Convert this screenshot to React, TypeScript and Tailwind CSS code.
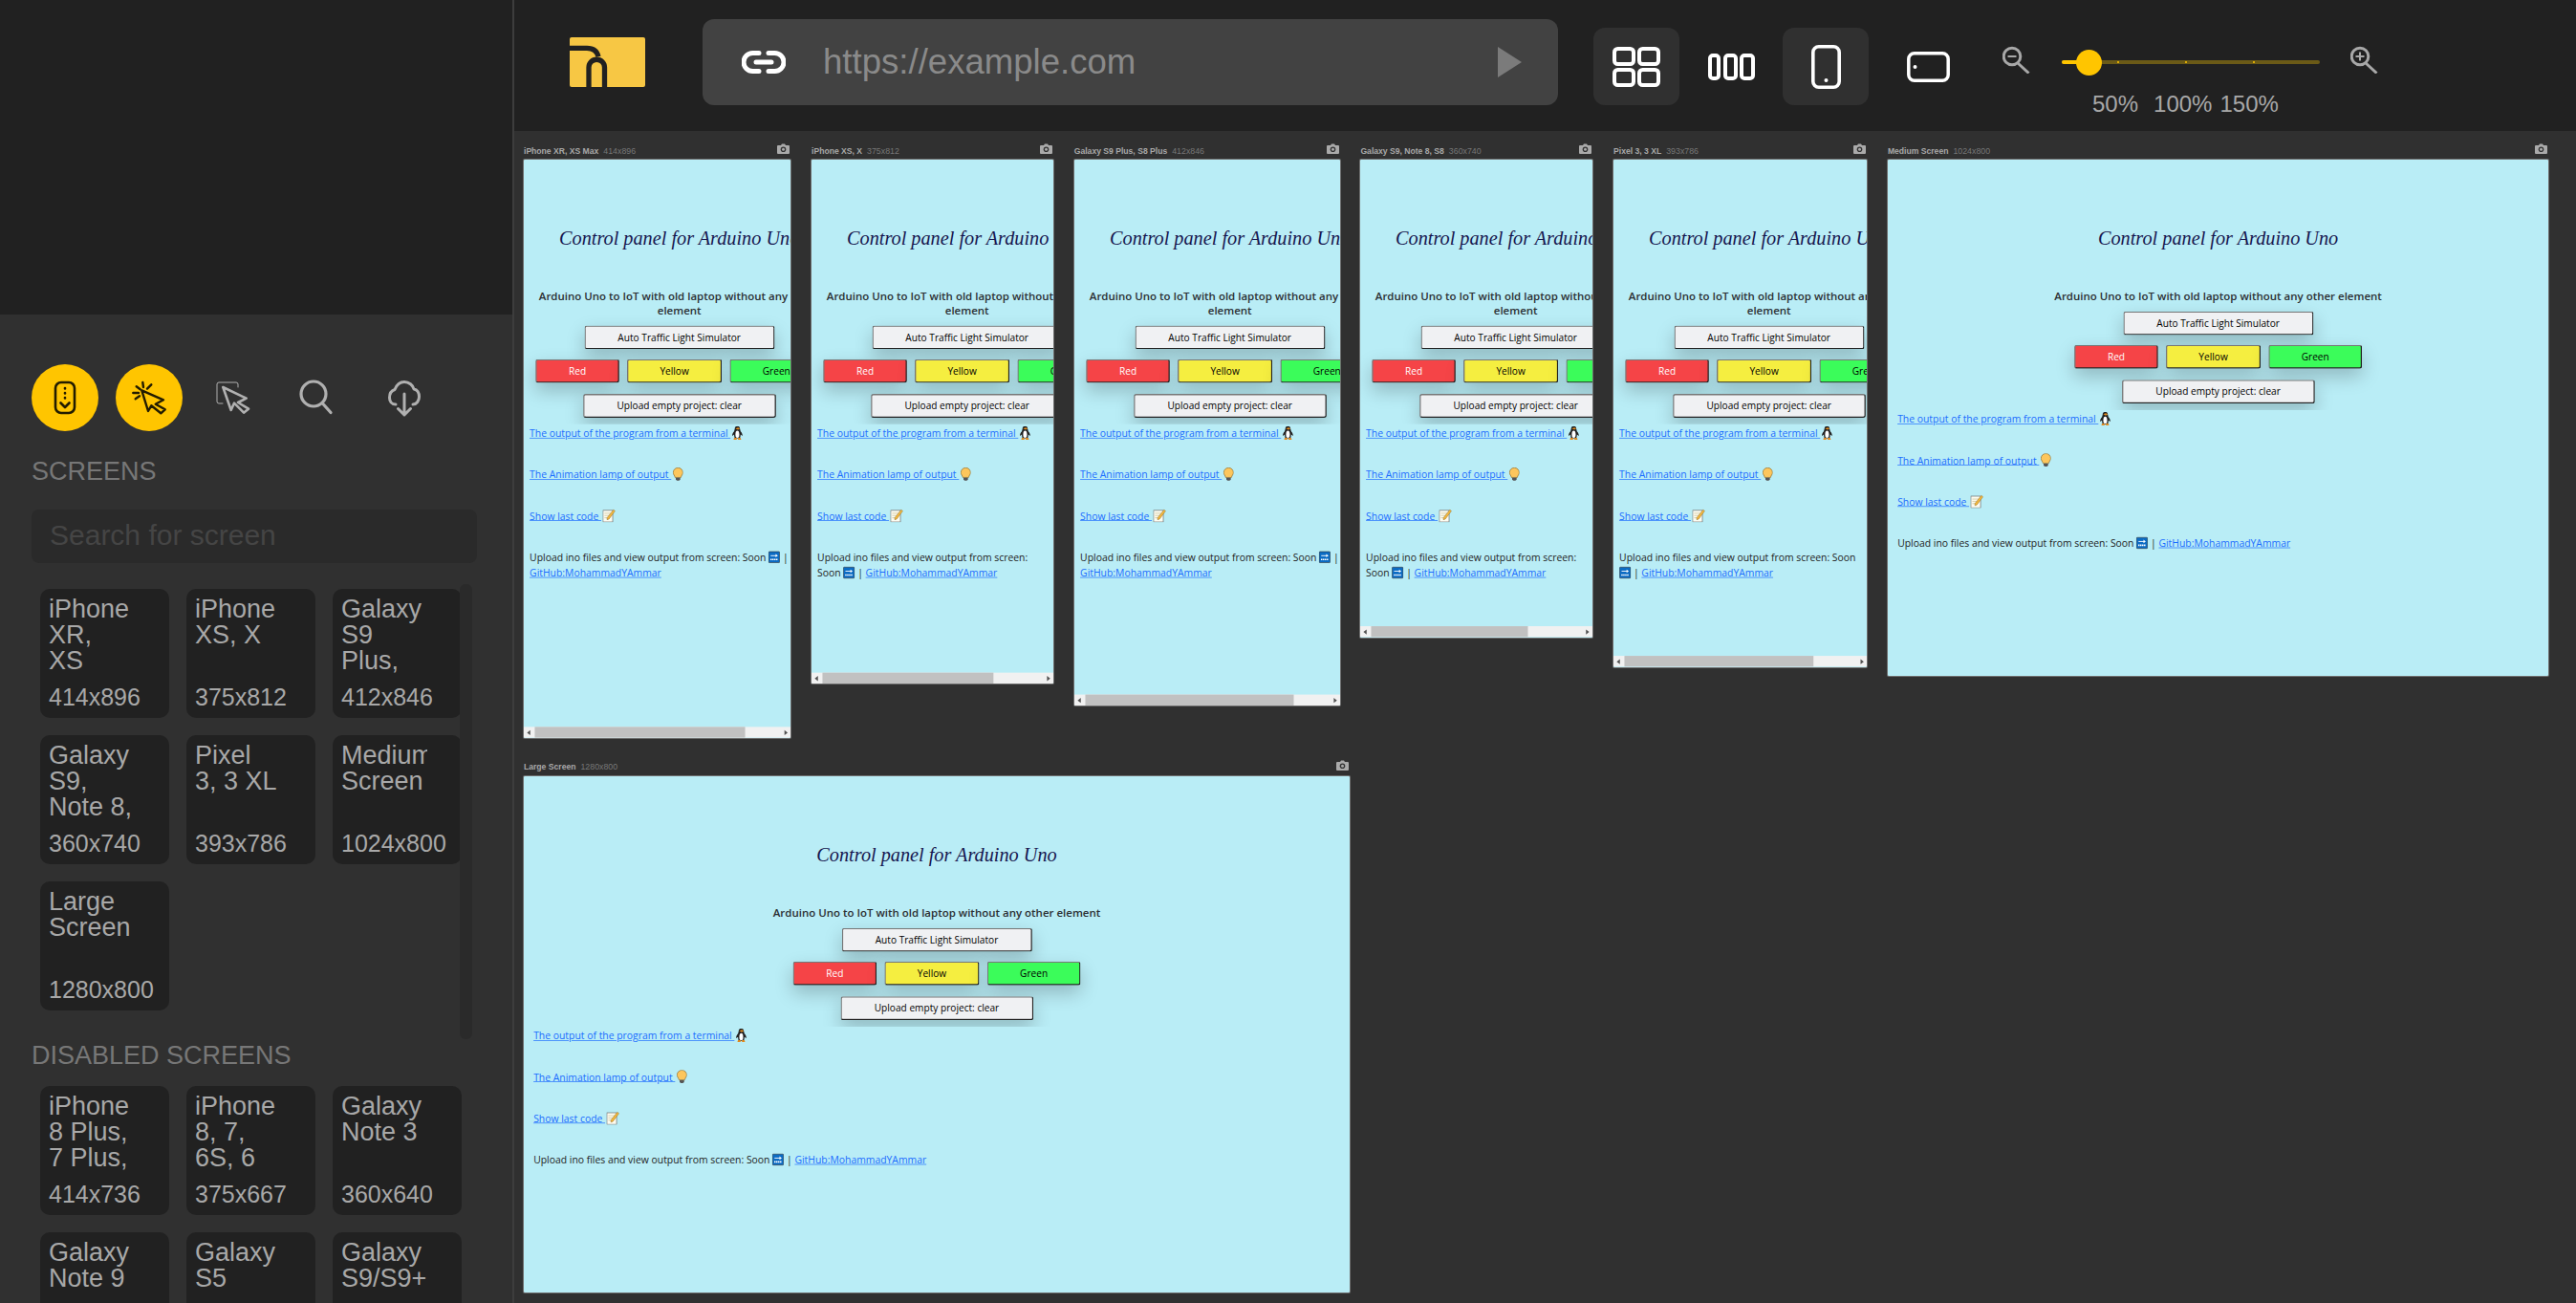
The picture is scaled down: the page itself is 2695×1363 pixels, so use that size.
import React from "react";

type Scr = { n: string; l: string[]; d: string };
const active: Scr[] = [
  { n: "iPhone XR, XS Max", l: ["iPhone", "XR,", "XS"], d: "414x896" },
  { n: "iPhone XS, X", l: ["iPhone", "XS, X"], d: "375x812" },
  { n: "Galaxy S9 Plus, S8 Plus", l: ["Galaxy", "S9", "Plus,"], d: "412x846" },
  { n: "Galaxy S9, Note 8, S8", l: ["Galaxy", "S9,", "Note 8,"], d: "360x740" },
  { n: "Pixel 3, 3 XL", l: ["Pixel", "3, 3 XL"], d: "393x786" },
  { n: "Medium Screen", l: ["Medium", "Screen"], d: "1024x800" },
  { n: "Large Screen", l: ["Large", "Screen"], d: "1280x800" },
];
const disabled: Scr[] = [
  { n: "", l: ["iPhone", "8 Plus,", "7 Plus,"], d: "414x736" },
  { n: "", l: ["iPhone", "8, 7,", "6S, 6"], d: "375x667" },
  { n: "", l: ["Galaxy", "Note 3"], d: "360x640" },
  { n: "", l: ["Galaxy", "Note 9"], d: "360x740" },
  { n: "", l: ["Galaxy", "S5"], d: "360x640" },
  { n: "", l: ["Galaxy", "S9/S9+"], d: "360x740" },
];

function Card({ s }: { s: Scr }) {
  return (
    <div className="w-[135px] h-[135px] bg-[#212121] rounded-[10px] pl-[9px] pt-[8px] text-[#a8a8a8] overflow-hidden">
      <div className="w-[90px] h-[81px] overflow-hidden text-[27px] leading-[27px]">
        {s.l.map((t) => (
          <div key={t} className="whitespace-nowrap">{t}</div>
        ))}
      </div>
      <div className="mt-[12px] text-[25px] leading-[25px]">{s.d}</div>
    </div>
  );
}

function PhoneScrollIcon() {
  return (
    <svg width="70" height="70" viewBox="0 0 70 70" fill="none" stroke="#221c00" strokeWidth="2.6" strokeLinecap="round" strokeLinejoin="round">
      <rect x="25" y="19" width="20" height="32" rx="6" />
      <path d="M35 25v.4M35 30v.4M35 35v.4" />
      <path d="M30.5 40.5 35 45l4.5-4.5" />
    </svg>
  );
}
function ClickIcon() {
  return (
    <svg width="70" height="70" viewBox="0 0 70 70" fill="none" stroke="#221c00" strokeWidth="2.4" strokeLinecap="round" strokeLinejoin="round">
      <path d="M27.3 27.3 50 37.3l-8.3 4.4 10 5.6-4.4 4-10-8-3.3 5.7z" />
      <path d="M28.3 19l.7 5M37.3 21.3l-4.3 4.4M21.7 23.3l4 3M18.3 30H24M20.7 36.3l4.3-3" />
    </svg>
  );
}
function SelectIcon() {
  return (
    <svg width="70" height="70" viewBox="0 0 70 70" fill="none" stroke="#b0b0b0" strokeLinejoin="round" strokeLinecap="round">
      <path d="M24 41h-4a2 2 0 0 1-2-2V21a2 2 0 0 1 2-2h18a2 2 0 0 1 2 2v3" strokeWidth="1" />
      <path d="M24.3 24 48.7 35.7 40 40l11 6.7-5 4-10-10-3.3 7.3z" strokeWidth="2.6" />
    </svg>
  );
}
function SearchIcon() {
  return (
    <svg width="70" height="70" viewBox="0 0 70 70" fill="none" stroke="#b0b0b0" strokeWidth="3.2" strokeLinecap="round">
      <circle cx="31" cy="31" r="13" />
      <path d="M40.5 41 49 50.5" />
    </svg>
  );
}
function CloudIcon() {
  return (
    <svg width="34" height="38" viewBox="0 0 34 38" fill="none" stroke="#b0b0b0" strokeWidth="3" strokeLinecap="round" strokeLinejoin="round">
      <path d="M8 25C3.500 25 1.500 21.500 1.500 18 1.500 13.500 4 10.500 7 9.500 9 4.500 13 1.500 17 1.500c5 0 9 3.500 10 7.500 3.500.5 5.500 4 5.500 8 0 4-2.500 8-6.500 8" />
      <path d="M17 14v22M10.500 29.500 17 36l6.500-6.500" />
    </svg>
  );
}

function ZoomIcon({ plus }: { plus?: boolean }) {
  return (
    <svg width="29" height="29" viewBox="0 0 29 29" fill="none" stroke="#a8a8a8" strokeWidth="3" className="mt-[-4px] shrink-0">
      <circle cx="10" cy="11" r="8.8" />
      <path d="M16 18 27.5 28.5" />
      <path d="M5.5 11h9" strokeWidth="2" />
      {plus ? <path d="M10 6.5v9" strokeWidth="2" /> : null}
    </svg>
  );
}

function Penguin() {
  return (
    <svg width="18" height="21" viewBox="0 0 18 21" className="inline-block align-[-4px] ml-[2px]">
      <path d="M9 0c3 0 4 2 4 4l1 4c2 2 3 5 3 7l-3-2c0 3-1 5-1 6H5c0-1-1-3-1-6l-3 2c0-2 1-5 3-7l1-4c0-2 1-4 4-4z" fill="#222" />
      <path d="M9 7c2 0 3 2 3 6s-1 5-3 5-3-1-3-5 1-6 3-6z" fill="#fff" />
      <path d="M6 3.500l4-1.500 3 1.500-3 2z" fill="#e08a1e" />
      <path d="M4 18h4v3H3zM10 18h4l1 3h-5z" fill="#e08a1e" />
    </svg>
  );
}
function Bulb() {
  return (
    <svg width="16" height="21" viewBox="0 0 16 21" className="inline-block align-[-4px] ml-[2px] mr-[2px]">
      <path d="M8 .5a7.500 7.500 0 0 1 7.500 7.500c0 3-2.500 4.500-3 7.500h-9c-.5-3-3-4.500-3-7.500A7.500 7.500 0 0 1 8 .5z" fill="#fdc65c" stroke="#8a6a2a" />
      <path d="M4.500 16h7v3l-2 1.500h-3l-2-1.500z" fill="#555" />
    </svg>
  );
}
function Memo() {
  return (
    <svg width="20" height="21" viewBox="0 0 20 21" className="inline-block align-[-4px] ml-[2px]">
      <rect x=".8" y="2.500" width="15" height="18" fill="#fdfdf2" stroke="#666" />
      <path d="M3 7h10M3 10.500h8M3 14h6" stroke="#c9b98a" />
      <path d="M7 14 17 1.500l2.500 2L10 16l-3 1z" fill="#f4b83c" stroke="#8a6a2a" strokeWidth=".7" />
    </svg>
  );
}
function Soon() {
  return (
    <svg width="18" height="20" viewBox="0 0 20 20" className="inline-block align-[-4px]">
      <rect x=".5" y=".5" width="19" height="19" rx="1.500" fill="#0b6bc4" stroke="#333" />
      <path d="M4 7.500h10" stroke="#fff" strokeWidth="1.500" />
      <path d="M12.500 4.500 16.500 7.500l-4 3z" fill="#fff" />
      <path d="M3.500 14h13" stroke="#fff" strokeWidth="2.500" strokeDasharray="2.500 .8" />
    </svg>
  );
}

const btn =
  "h-[37px] rounded-[4px] border-2 [border-style:outset] text-[15px] shadow-[0_12px_28px_rgba(0,0,0,0.22)] flex items-center justify-center";

function PageBody({ small }: { small: boolean }) {
  return (
    <div className="text-[#222] [font-family:'Open_Sans','Liberation_Sans',sans-serif]">
      <div className="min-w-[482px] overflow-hidden flex flex-col items-center pt-[104px] pb-[10px]">
        <h1 className="text-[30px] leading-[36px] italic text-[#16164f] [font-family:'Liberation_Serif',serif] whitespace-nowrap">
          Control panel for Arduino Uno
        </h1>
        <div className="mt-[61px] w-full px-[8px] text-center text-[17px] leading-[22px] font-semibold text-[#2b2f33]">
          Arduino Uno to IoT with old laptop without any other element
        </div>
        <div className={`${btn} mt-[12px] w-[295px] bg-[#f0f1f3] text-black border-[#767676]`}>Auto Traffic Light Simulator</div>
        <div className="mt-[15px] flex gap-[12px]">
          <div className={`${btn} w-[130px] bg-[#f54447] text-white border-[#777]`}>Red</div>
          <div className={`${btn} w-[147px] bg-[#f5ee40] text-black border-[#777]`}>Yellow</div>
          <div className={`${btn} w-[145px] bg-[#3bfc5a] text-black border-[#777]`}>Green</div>
        </div>
        <div className={`${btn} mt-[17px] w-[299px] bg-[#f0f1f3] text-black border-[#767676]`}>Upload empty project: clear</div>
      </div>
      <div className={`${small ? "pl-[9px]" : "pl-[15px]"} pr-[1px] pt-[3px] text-[15.400px] leading-[24px]`}>
        <p><a className="text-[#1a6cff] underline">The output of the program from a terminal <Penguin /></a></p>
        <p className="mt-[40px]"><a className="text-[#1a6cff] underline">The Animation lamp of output <Bulb /></a></p>
        <p className="mt-[40px]"><a className="text-[#1a6cff] underline">Show last code <Memo /></a></p>
        <p className="mt-[40px]">
          Upload ino files and view output from screen: Soon <Soon /> | <a className="text-[#1a6cff] underline">GitHub:MohammadYAmmar</a>
        </p>
      </div>
    </div>
  );
}

function Pane({ name, w, h }: { name: string; w: number; h: number }) {
  const scrolls = w < 482;
  return (
    <div className="shrink-0" style={{ width: w * 0.675 }}>
      <div className="h-[20px] pb-[3px] flex items-center justify-between [font-family:'Liberation_Sans',sans-serif]">
        <div className="whitespace-nowrap">
          <span className="text-[8.600px] font-bold text-[#a8a8a8]">{name}</span>
          <span className="ml-[5px] text-[8.800px] text-[#777]">{w}x{h}</span>
        </div>
        <svg width="13" height="11" viewBox="0 0 13 11" className="mr-[1px]">
          <path d="M1 2h3l1-1.500h3L9 2h3a1 1 0 0 1 1 1v7a1 1 0 0 1-1 1H1a1 1 0 0 1-1-1V3a1 1 0 0 1 1-1z" fill="#aaa" />
          <circle cx="6.500" cy="6.300" r="2.800" fill="#333" />
          <circle cx="6.500" cy="6.300" r="1.500" fill="#aaa" />
        </svg>
      </div>
      <div
        className="overflow-hidden bg-[#b9edf6] rounded-[1px] shadow-[0_0_0_1px_#6e6e6e]"
        style={{ width: w * 0.675, height: h * 0.675 }}
      >
        <div className="relative origin-top-left scale-[0.675] overflow-hidden" style={{ width: w, height: h }}>
          <PageBody small={scrolls} />
          {scrolls ? (
            <div className="absolute left-0 right-0 bottom-0 h-[17px] bg-[#f1f1f1]">
              <div className="absolute top-0 bottom-0 bg-[#c1c1c1]" style={{ left: 17, width: ((w - 34) * w) / 482 }} />
              <div className="absolute left-[5px] top-[5px] w-0 h-0 border-y-[4px] border-y-transparent border-r-[5px] border-r-[#505050]" />
              <div className="absolute right-[5px] top-[5px] w-0 h-0 border-y-[4px] border-y-transparent border-l-[5px] border-l-[#505050]" />
            </div>
          ) : null}
        </div>
      </div>
    </div>
  );
}

export default function App() {
  return (
    <div className="flex w-[2695px] h-[1363px] overflow-hidden bg-[#303030] [font-family:'Liberation_Sans',Arial,sans-serif]">
      <aside className="w-[538px] shrink-0 h-full border-r-2 border-r-[#3d3d3d] bg-[#303030] overflow-hidden">
        <div className="h-[329px] bg-[#212121]" />
        <div className="pl-[33px] pt-[52px]">
          <div className="flex gap-[18px] items-center">
            <div className="w-[70px] h-[70px] rounded-full bg-[#ffc500]"><PhoneScrollIcon /></div>
            <div className="w-[70px] h-[70px] rounded-full bg-[#ffc500]"><ClickIcon /></div>
            <div className="w-[70px] h-[70px]"><SelectIcon /></div>
            <div className="w-[70px] h-[70px]"><SearchIcon /></div>
            <div className="w-[70px] h-[70px] pl-[21px] pt-[17px]"><CloudIcon /></div>
          </div>
          <div className="mt-[26px] h-[32px] text-[27px] leading-[32px] text-[#777]">SCREENS</div>
          <input
            readOnly
            placeholder="Search for screen"
            className="mt-[24px] block w-[466px] h-[56px] rounded-[8px] bg-[#2a2a2a] pl-[19px] pb-[2px] text-[30px] outline-none placeholder:text-[#454545]"
          />
          <div className="relative mt-[22px] w-[461px] h-[476px] pl-[9px] pt-[5px] overflow-hidden">
            <div className="grid grid-cols-[135px_135px_135px] gap-x-[18px] gap-y-[18px]">
              {active.map((s) => <Card key={s.d} s={s} />)}
            </div>
            <div className="absolute right-0 top-0 w-[13px] h-[476px] rounded-[6px] bg-[#2a2a2a]" />
          </div>
          <div className="mt-[1px] h-[32px] text-[27px] leading-[32px] text-[#777]">DISABLED SCREENS</div>
          <div className="mt-[16px] pl-[9px] grid grid-cols-[135px_135px_135px] gap-x-[18px] gap-y-[18px]">
            {disabled.map((s) => <Card key={s.l.join()} s={s} />)}
          </div>
        </div>
      </aside>

      <main className="flex-1 min-w-0 h-full flex flex-col">
        <header className="h-[137px] shrink-0 bg-[#212121] flex items-start">
          <svg width="79" height="52" viewBox="0 0 79 52" className="ml-[58px] mt-[39px] shrink-0">
            <rect width="79" height="52" rx="2" fill="#f7c744" />
            <g fill="none" stroke="#212121" strokeWidth="5.300">
              <path d="M0 11.300h18q10 0 12 9" />
              <path d="M20 52V31.500a8.250 8.250 0 0 1 16.500 0V52" />
            </g>
          </svg>
          <div className="ml-[60px] mt-[20px] w-[895px] h-[90px] shrink-0 rounded-[12px] bg-[#424242] flex items-center">
            <svg width="46" height="24" viewBox="0 0 46 24" fill="none" stroke="#fff" strokeWidth="5" strokeLinecap="round" className="ml-[41px] shrink-0">
              <path d="M18 2.500h-6.500a9.500 9.500 0 0 0 0 19H18" />
              <path d="M28 2.500h6.500a9.500 9.500 0 0 1 0 19H28" />
              <path d="M15 12h16" />
            </svg>
            <div className="ml-[39px] text-[36.600px] text-[#8a8a8a]">https://example.com</div>
            <svg width="25" height="32" viewBox="0 0 25 32" className="ml-auto mr-[38px] shrink-0">
              <path d="M0 0 25 16 0 32z" fill="#7b7b7b" />
            </svg>
          </div>
          <div className="ml-[37px] mt-[29px] flex shrink-0">
            <div className="w-[90px] h-[81px] rounded-[12px] bg-[#303030] flex items-center justify-center">
              <svg width="50" height="42" viewBox="0 0 50 42" fill="none" stroke="#fff" strokeWidth="4">
                <rect x="2" y="2" width="20" height="16" rx="3.500" />
                <rect x="28" y="2" width="20" height="16" rx="3.500" />
                <rect x="2" y="24" width="20" height="16" rx="3.500" />
                <rect x="28" y="24" width="20" height="16" rx="3.500" />
              </svg>
            </div>
            <div className="ml-[9px] w-[90px] h-[81px] flex items-center justify-center">
              <svg width="49" height="28" viewBox="0 0 49 28" fill="none" stroke="#fff" strokeWidth="4">
                <rect x="2" y="2" width="9" height="24" rx="3" />
                <rect x="18" y="2" width="11" height="24" rx="3" />
                <rect x="35" y="2" width="12" height="24" rx="3" />
              </svg>
            </div>
            <div className="ml-[9px] w-[90px] h-[81px] rounded-[12px] bg-[#303030] flex items-center justify-center">
              <svg width="31" height="46" viewBox="0 0 31 46" fill="none" stroke="#fff" strokeWidth="3.600">
                <rect x="1.800" y="1.800" width="27.400" height="42.400" rx="6" />
                <circle cx="15.500" cy="37" r="2" fill="#fff" stroke="none" />
              </svg>
            </div>
            <div className="ml-[17px] w-[90px] h-[81px] flex items-center justify-center">
              <svg width="45" height="32" viewBox="0 0 45 32" fill="none" stroke="#fff" strokeWidth="3.500">
                <rect x="1.800" y="1.800" width="41.400" height="28.400" rx="6" />
                <circle cx="8.500" cy="16" r="2" fill="#fff" stroke="none" />
              </svg>
            </div>
          </div>
          <div className="ml-[33px] mt-[52px] w-[393px] shrink-0">
            <div className="flex items-start">
              <ZoomIcon />
              <div className="relative ml-[33px] w-[270px] h-[27px] shrink-0">
                <div className="absolute left-0 right-0 top-[11px] h-[4px] rounded-full bg-[#6b5a17]" />
                <div className="absolute left-0 w-[20px] top-[11px] h-[4px] rounded-l-full bg-[#ffc500]" />
                <div className="absolute left-[58px] top-[12px] w-[2px] h-[2px] rounded-full bg-[#ffc500]" />
                <div className="absolute left-[129px] top-[12px] w-[2px] h-[2px] rounded-full bg-[#ffc500]" />
                <div className="absolute left-[200px] top-[12px] w-[2px] h-[2px] rounded-full bg-[#ffc500]" />
                <div className="absolute left-[15px] top-0 w-[27px] h-[27px] rounded-full bg-[#ffc500]" />
              </div>
              <div className="ml-[32px]"><ZoomIcon plus /></div>
            </div>
            <div className="mt-[16px] pl-[94px] flex text-[24px] leading-[28px] text-[#a8a8a8] whitespace-nowrap">
              <span>50%</span>
              <span className="ml-[16px]">100%</span>
              <span className="ml-[8px]">150%</span>
            </div>
          </div>
        </header>
        <div className="flex-1 min-h-0 overflow-hidden pl-[10px] pt-[10px] flex flex-wrap content-start gap-x-[21.600px] gap-y-[20px]">
          {active.map((s) => {
            const [w, h] = s.d.split("x").map(Number);
            return <Pane key={s.d} name={s.n} w={w} h={h} />;
          })}
        </div>
      </main>
    </div>
  );
}
